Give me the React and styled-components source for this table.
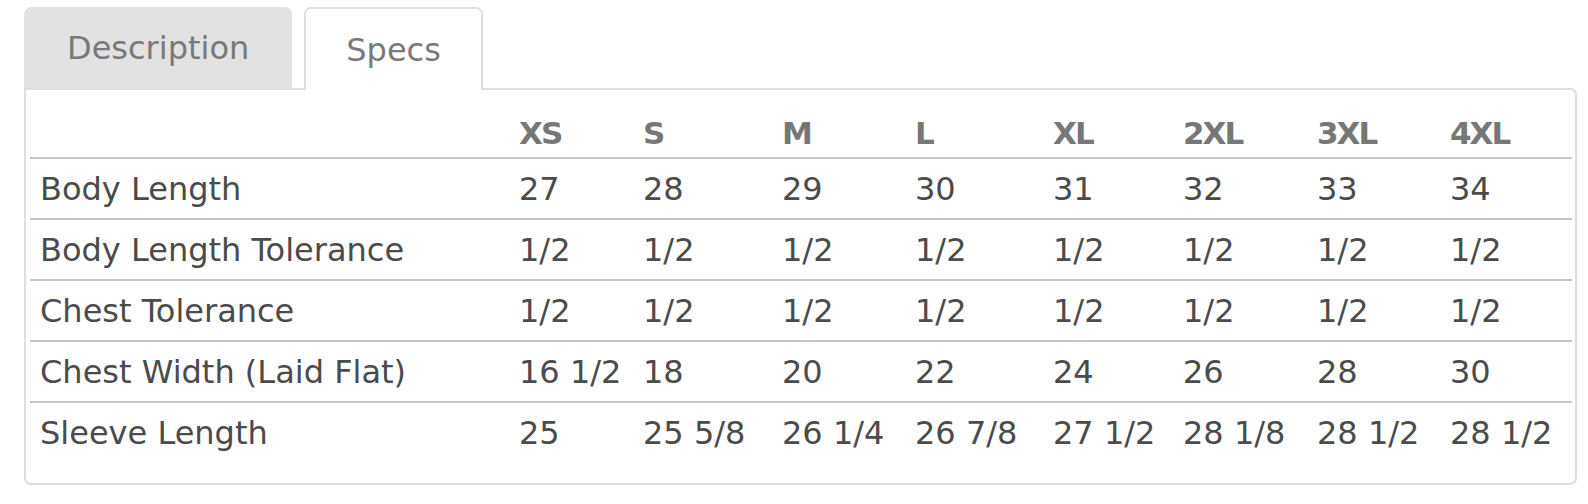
import React, { useState } from "react";
import styled, { createGlobalStyle } from "styled-components";

const GlobalStyle = createGlobalStyle`
  html, body { margin: 0; padding: 0; background: #ffffff; }
  body { font-family: "DejaVu Sans", "Open Sans", sans-serif; }
`;

const Page = styled.div`
  padding: 7px 11px 0 24px;
`;

const TabBar = styled.div`
  display: flex;
  align-items: flex-end;
  gap: 12px;
  position: relative;
  z-index: 1;
  margin-bottom: -2px;
`;

const Tab = styled.button`
  box-sizing: border-box;
  height: ${(p) => (p.$active ? "83px" : "81px")};
  margin-bottom: ${(p) => (p.$active ? "0" : "2px")};
  padding: 0 ${(p) => (p.$active ? "40px" : "43px")};
  font-family: "DejaVu Sans", sans-serif;
  font-size: 32px;
  color: #797979;
  background: ${(p) => (p.$active ? "#ffffff" : "#e2e2e2")};
  border: ${(p) => (p.$active ? "2px solid #dedede" : "none")};
  border-bottom: none;
  border-radius: 7px 7px 0 0;
  cursor: pointer;
  line-height: 1;
`;

const Panel = styled.div`
  box-sizing: border-box;
  width: 1553px;
  border: 2px solid #dedede;
  border-radius: 0 7px 7px 7px;
  padding: 0 3px 20px 4px;
`;

const Table = styled.table`
  width: 1542px;
  table-layout: fixed;
  border-collapse: collapse;
  color: #4b4b4b;
`;

const HeadCell = styled.th`
  text-align: left;
  font-weight: bold;
  font-size: 31px;
  letter-spacing: -2px;
  color: #777777;
  line-height: 40px;
  padding: 23px 10px 4px;
  white-space: nowrap;
`;

const Row = styled.tr`
  border-top: 2px solid #c6c6c6;
`;

const Cell = styled.td`
  font-size: 32px;
  height: 61px;
  line-height: 40px;
  padding: 0 10px;
  vertical-align: middle;
  white-space: nowrap;
  box-sizing: border-box;
`;

const sizes = ["XS", "S", "M", "L", "XL", "2XL", "3XL", "4XL"];
const widths = [479, 124, 139, 133, 138, 130, 134, 133, 132];

const rows = [
  ["Body Length", "27", "28", "29", "30", "31", "32", "33", "34"],
  ["Body Length Tolerance", "1/2", "1/2", "1/2", "1/2", "1/2", "1/2", "1/2", "1/2"],
  ["Chest Tolerance", "1/2", "1/2", "1/2", "1/2", "1/2", "1/2", "1/2", "1/2"],
  ["Chest Width (Laid Flat)", "16 1/2", "18", "20", "22", "24", "26", "28", "30"],
  ["Sleeve Length", "25", "25 5/8", "26 1/4", "26 7/8", "27 1/2", "28 1/8", "28 1/2", "28 1/2"],
];

export default function App() {
  const [tab, setTab] = useState("specs");
  return (
    <Page>
      <GlobalStyle />
      <TabBar>
        <Tab $active={tab === "description"} onClick={() => setTab("description")}>
          Description
        </Tab>
        <Tab $active={tab === "specs"} onClick={() => setTab("specs")}>
          Specs
        </Tab>
      </TabBar>
      <Panel>
        <Table>
          <colgroup>
            {widths.map((w, i) => (
              <col key={i} style={{ width: w }} />
            ))}
          </colgroup>
          <thead>
            <tr>
              <HeadCell />
              {sizes.map((s) => (
                <HeadCell key={s}>{s}</HeadCell>
              ))}
            </tr>
          </thead>
          <tbody>
            {rows.map((r) => (
              <Row key={r[0]}>
                {r.map((c, i) => (
                  <Cell key={i}>{c}</Cell>
                ))}
              </Row>
            ))}
          </tbody>
        </Table>
      </Panel>
    </Page>
  );
}
